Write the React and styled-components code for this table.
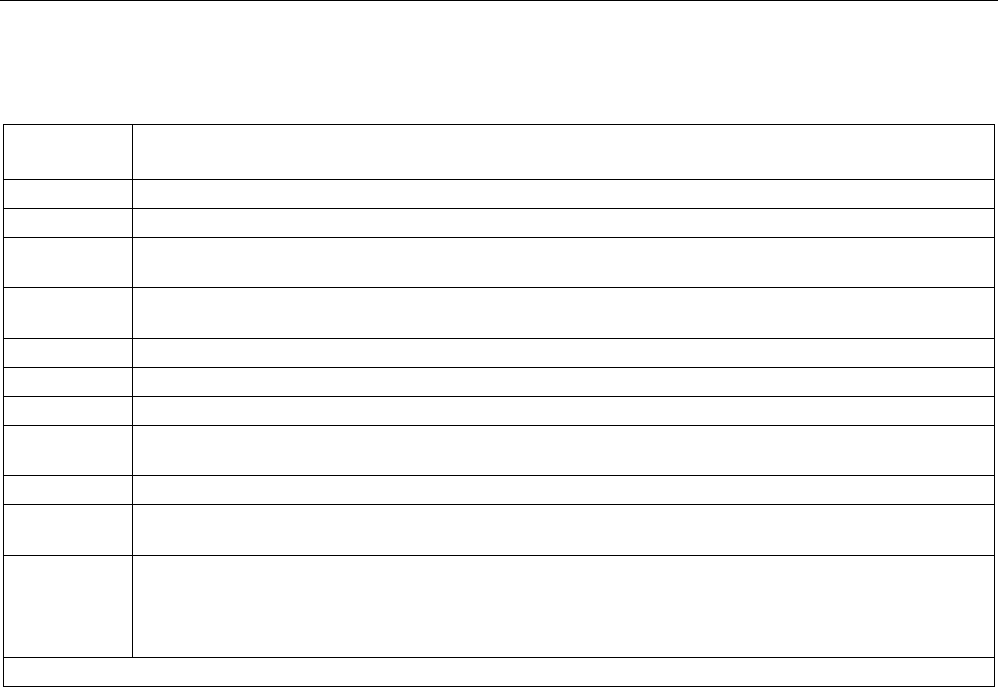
import React from 'react'
import styled, { createGlobalStyle } from 'styled-components'

const rows = [55, 29, 29, 50, 51, 29, 29, 29, 50, 29, 51, 102]

const App = () => {
    return (
        <>
            <GlobalStyle />
            <Page>
                <TopRule />
                <Sheet>
                    {rows.map((h, i) => (
                        <React.Fragment key={i}>
                            <LabelCell h={h} />
                            <ValueCell h={h} />
                        </React.Fragment>
                    ))}
                    <FooterCell h={29} />
                </Sheet>
            </Page>
        </>
    )
}

export default App

const GlobalStyle = createGlobalStyle`
    * { box-sizing: border-box; }
    body {
        margin: 0;
        background: #ffffff;
        font-family: "Liberation Sans", Arial, sans-serif;
        font-size: 13px;
        color: #000;
    }
`

const Page = styled.div`
    width: 998px;
    height: 687px;
    background: #fff;
`

const TopRule = styled.div`
    height: 1px;
    width: 100%;
    background: #000;
    margin-bottom: 123px;
`

const Sheet = styled.div`
    display: grid;
    grid-template-columns: 129px 862px;
    width: 992px;
    margin-left: 3px;
    border-top: 1px solid #000;
    border-left: 1px solid #000;
`

const Cell = styled.div`
    height: ${({ h }) => h}px;
    border-right: 1px solid #000;
    border-bottom: 1px solid #000;
`

const LabelCell = styled(Cell)``

const ValueCell = styled(Cell)``

const FooterCell = styled(Cell)`
    grid-column: 1 / span 2;
`
